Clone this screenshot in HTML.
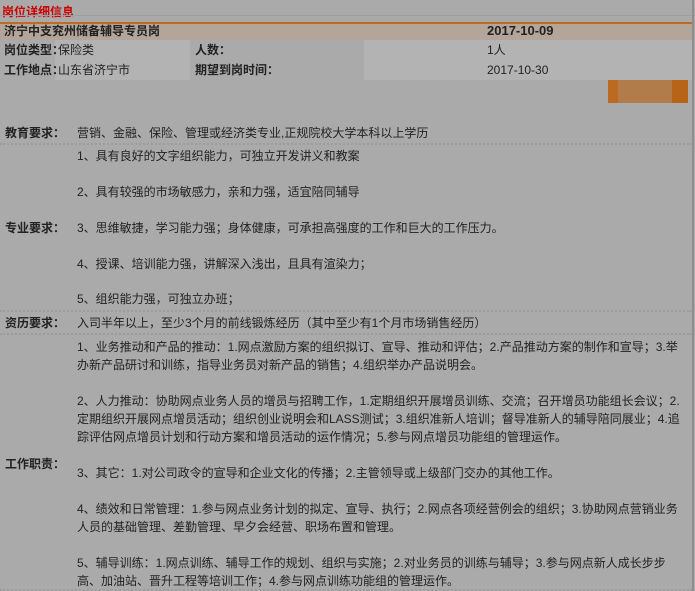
<!DOCTYPE html>
<html><head><meta charset="utf-8"><style>
html,body{margin:0;width:695px;height:591px;overflow:hidden;}
body{background:#aaaaaa;position:relative;font-family:"Liberation Sans","Noto Sans CJK SC",sans-serif;font-size:12px;color:#222;}
.a{position:absolute;white-space:nowrap;line-height:18px;}
.b{font-weight:bold;}
.dot{position:absolute;left:0;width:692px;height:0;border-top:2px dotted #9c9c9c;}
</style></head><body>
<div class="a b" style="left:2px;top:3px;color:#c00;font-size:12px;">岗位详细信息</div>
<div style="position:absolute;left:0;top:15px;width:695px;height:1px;background:#9e9e9e"></div>
<div style="position:absolute;left:0;top:22px;width:692px;height:2px;background:#c06a20"></div>
<div style="position:absolute;left:0;top:24px;width:692px;height:16px;background:#b4a59b"></div>
<div style="position:absolute;left:55px;top:40px;width:135px;height:40px;background:#b3b3b3"></div>
<div style="position:absolute;left:364px;top:40px;width:328px;height:40px;background:#b3b3b3"></div>
<div style="position:absolute;left:692px;top:0;width:2px;height:591px;background:#8e8e8e"></div>
<div class="a b" style="left:4px;top:22px;">济宁中支兖州储备辅导专员岗</div>
<div class="a b" style="left:487px;top:22px;font-size:13px;">2017-10-09</div>
<div class="a b" style="left:4px;top:41px;">岗位类型：</div>
<div class="a" style="left:58px;top:41px;">保险类</div>
<div class="a b" style="left:195px;top:41px;">人数：</div>
<div class="a" style="left:487px;top:41px;">1人</div>
<div class="a b" style="left:4px;top:61px;">工作地点：</div>
<div class="a" style="left:58px;top:61px;">山东省济宁市</div>
<div class="a b" style="left:195px;top:61px;">期望到岗时间：</div>
<div class="a" style="left:487px;top:61px;">2017-10-30</div>
<div style="position:absolute;left:608px;top:80px;width:80px;height:23px;background:#b27c4a"></div>
<div style="position:absolute;left:608px;top:80px;width:10px;height:23px;background:#bb6a22"></div>
<div style="position:absolute;left:672px;top:80px;width:16px;height:23px;background:#b86418"></div>

<div class="a b" style="left:5px;top:124px;">教育要求：</div>
<div class="a" style="left:77px;top:124px;">营销、金融、保险、管理或经济类专业,正规院校大学本科以上学历</div>
<div class="dot" style="top:143px"></div>
<div class="a" style="left:77px;top:147px;">1、具有良好的文字组织能力，可独立开发讲义和教案</div>
<div class="a" style="left:77px;top:183px;">2、具有较强的市场敏感力，亲和力强，适宜陪同辅导</div>
<div class="a b" style="left:5px;top:219px;">专业要求：</div>
<div class="a" style="left:77px;top:219px;">3、思维敏捷，学习能力强；身体健康，可承担高强度的工作和巨大的工作压力。</div>
<div class="a" style="left:77px;top:255px;">4、授课、培训能力强，讲解深入浅出，且具有渲染力；</div>
<div class="a" style="left:77px;top:290px;">5、组织能力强，可独立办班；</div>
<div class="dot" style="top:310px"></div>
<div class="a b" style="left:5px;top:314px;">资历要求：</div>
<div class="a" style="left:77px;top:314px;">入司半年以上，至少3个月的前线锻炼经历（其中至少有1个月市场销售经历）</div>
<div class="dot" style="top:333px"></div>

<div class="a" style="left:77px;top:338px;">1、业务推动和产品的推动：1.网点激励方案的组织拟订、宣导、推动和评估；2.产品推动方案的制作和宣导；3.举</div>
<div class="a" style="left:77px;top:356px;">办新产品研讨和训练，指导业务员对新产品的销售；4.组织举办产品说明会。</div>
<div class="a" style="left:77px;top:392px;">2、人力推动：协助网点业务人员的增员与招聘工作，1.定期组织开展增员训练、交流；召开增员功能组长会议；2.</div>
<div class="a" style="left:77px;top:410px;">定期组织开展网点增员活动；组织创业说明会和LASS测试；3.组织准新人培训；督导准新人的辅导陪同展业；4.追</div>
<div class="a" style="left:77px;top:428px;">踪评估网点增员计划和行动方案和增员活动的运作情况；5.参与网点增员功能组的管理运作。</div>
<div class="a b" style="left:5px;top:455px;">工作职责：</div>
<div class="a" style="left:77px;top:464px;">3、其它：1.对公司政令的宣导和企业文化的传播；2.主管领导或上级部门交办的其他工作。</div>
<div class="a" style="left:77px;top:500px;">4、绩效和日常管理：1.参与网点业务计划的拟定、宣导、执行；2.网点各项经营例会的组织；3.协助网点营销业务</div>
<div class="a" style="left:77px;top:518px;">人员的基础管理、差勤管理、早夕会经营、职场布置和管理。</div>
<div class="a" style="left:77px;top:554px;">5、辅导训练：1.网点训练、辅导工作的规划、组织与实施；2.对业务员的训练与辅导；3.参与网点新人成长步步</div>
<div class="a" style="left:77px;top:572px;">高、加油站、晋升工程等培训工作；4.参与网点训练功能组的管理运作。</div>
<div class="dot" style="top:589px"></div>
</body></html>
